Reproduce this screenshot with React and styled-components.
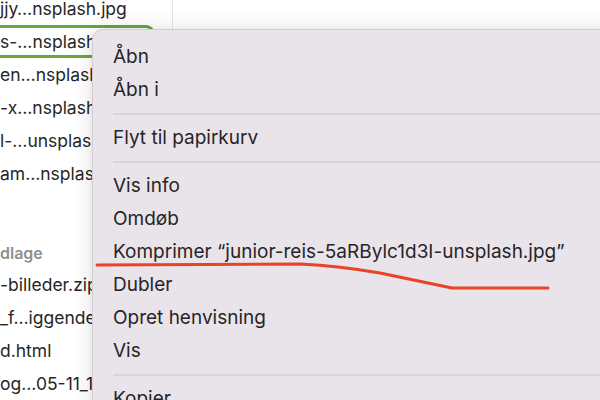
import React from "react";
import styled, { createGlobalStyle } from "styled-components";

const Global = createGlobalStyle`
  html, body { margin: 0; padding: 0; background: #ffffff; overflow: hidden; }
  #root { width: 600px; height: 400px; }
`;

const Screen = styled.div`
  position: relative;
  width: 600px;
  height: 400px;
  overflow: hidden;
  display: flex;
  background: #ffffff;
  font-family: Inter, "Liberation Sans", sans-serif;
`;

const Column = styled.div`
  width: 172px;
  flex: none;
  border-right: 1px solid #e3e3e3;
  overflow: hidden;
`;

const NextColumn = styled.div`
  flex: 1;
  background: #ffffff;
`;

const List = styled.div`
  margin: -8px 0 0 -20px;
  display: flex;
  flex-direction: column;
`;

const Row = styled.div`
  box-sizing: border-box;
  height: 33px;
  margin-right: ${p => (p.$selected ? "17px" : "0")};
  border: ${p => (p.$selected ? "3px solid #66a83f" : "none")};
  border-radius: ${p => (p.$selected ? "9px" : "0")};
  line-height: ${p => (p.$selected ? "27px" : "33px")};
  padding-left: ${p => (p.$selected ? "17px" : "20px")};
  font-size: 17.5px;
  color: #262626;
  white-space: nowrap;
  overflow: hidden;
`;

const SectionHeader = styled.div`
  padding: 53px 0 5px 20px;
  line-height: 20px;
  font-size: 16px;
  font-weight: 600;
  color: #8f8f8f;
  white-space: nowrap;
`;

const Menu = styled.div`
  position: absolute;
  left: 92px;
  top: 29px;
  width: 540px;
  height: 420px;
  box-sizing: border-box;
  padding-top: 10px;
  background: #e9e4ea;
  border: 1px solid #d2cdd3;
  border-radius: 11px;
  box-shadow: 0 0 22px rgba(0, 0, 0, 0.12), 0 2px 6px rgba(0, 0, 0, 0.06);
  display: flex;
  flex-direction: column;
`;

const Item = styled.div`
  height: 33px;
  line-height: 33px;
  padding-left: 20px;
  font-size: 19px;
  color: #272527;
  white-space: nowrap;
`;

const Separator = styled.div`
  height: 2px;
  margin: 6.5px 0 6.5px 20px;
  background: #d9d4da;
`;

const Annotation = styled.svg`
  position: absolute;
  left: 0;
  top: 0;
  pointer-events: none;
`;

const files = [
  "jjy…nsplash.jpg",
  "s-…nsplash.jpg",
  "en…nsplash.jpg",
  "-x…nsplash.jpg",
  "l-…unsplash.jpg",
  "am…nsplash.jpg",
];

const files2 = ["-billeder.zip", "_f…iggende.pdf", "d.html", "og…05-11_14.png"];

export default function App() {
  return (
    <>
      <Global />
      <Screen>
        <Column>
          <List>
            {files.map((f, i) => (
              <Row key={f} $selected={i === 1}>{f}</Row>
            ))}
            <SectionHeader>dlage</SectionHeader>
            {files2.map(f => (
              <Row key={f}>{f}</Row>
            ))}
          </List>
        </Column>
        <NextColumn />
        <Menu>
          <Item>Åbn</Item>
          <Item>Åbn i</Item>
          <Separator />
          <Item>Flyt til papirkurv</Item>
          <Separator />
          <Item>Vis info</Item>
          <Item>Omdøb</Item>
          <Item>Komprimer “junior-reis-5aRBylc1d3I-unsplash.jpg”</Item>
          <Item>Dubler</Item>
          <Item>Opret henvisning</Item>
          <Item>Vis</Item>
          <Separator />
          <Item>Kopier</Item>
        </Menu>
        <Annotation width="600" height="400" viewBox="0 0 600 400">
          <path
            d="M97 265 L300 264 Q340 266 380 273 L452 288 L548 288"
            fill="none"
            stroke="#ea4127"
            strokeWidth="3"
            strokeLinecap="round"
            strokeLinejoin="round"
          />
        </Annotation>
      </Screen>
    </>
  );
}
